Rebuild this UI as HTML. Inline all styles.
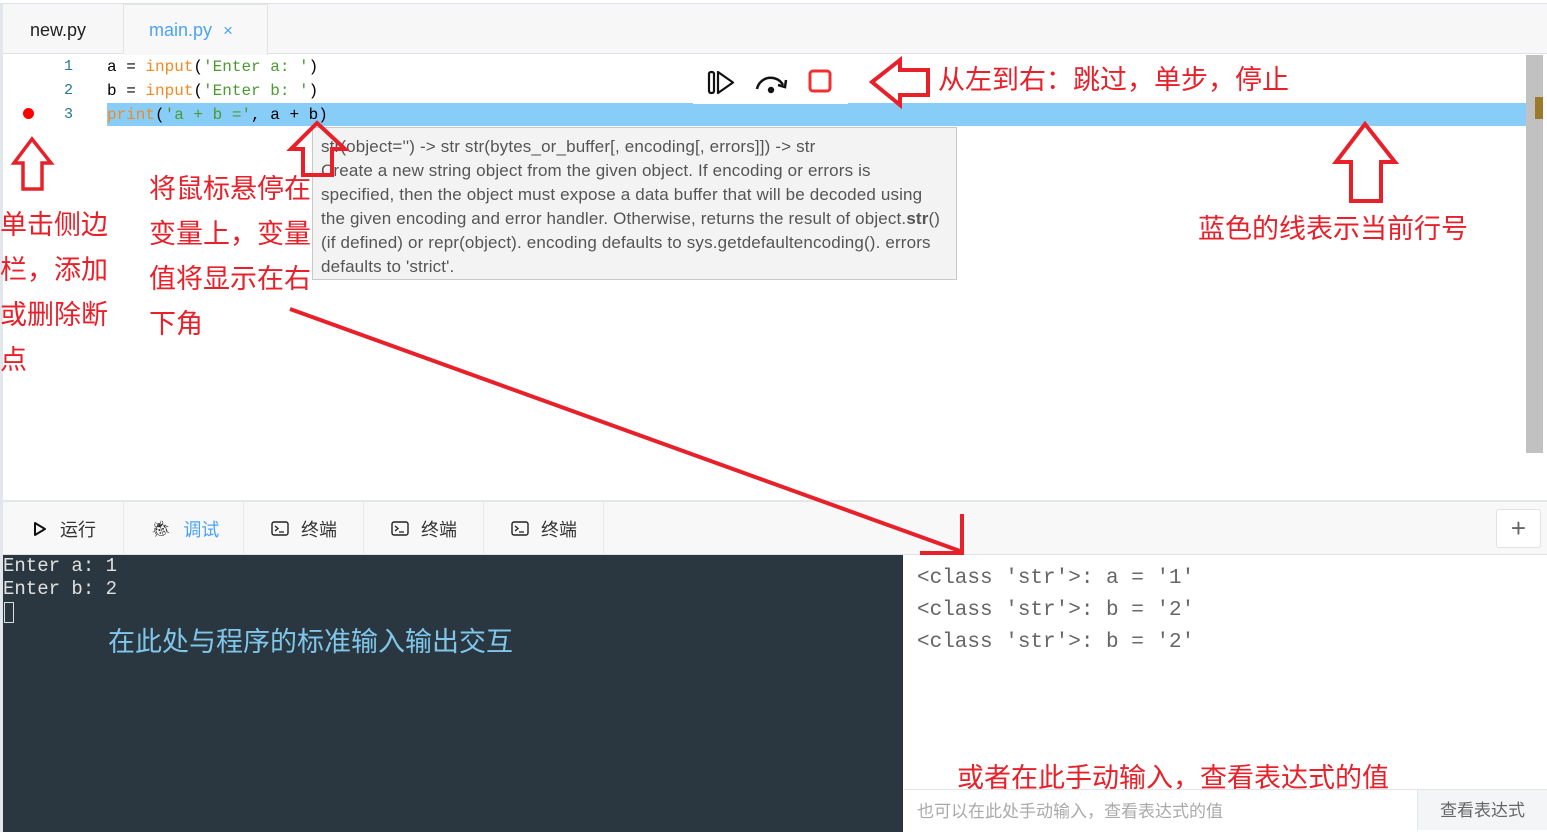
<!DOCTYPE html>
<html><head><meta charset="utf-8"><style>
*{margin:0;padding:0;box-sizing:border-box}
body{width:1547px;height:832px;position:relative;overflow:hidden;background:#fff;font-family:"Liberation Sans","Noto Sans CJK SC",sans-serif}
.abs{position:absolute}
.mono{font-family:"Liberation Mono","DejaVu Sans Mono",monospace}
.red{color:#e8202a;font-family:"Noto Sans CJK SC",sans-serif;font-size:27px;line-height:45px}
</style></head><body>
<div class="abs" style="left:0;top:3px;width:1547px;height:1px;background:#dde1e6"></div>
<div class="abs" style="left:0;top:3px;width:3px;height:829px;background:#e3e6ea"></div>
<div class="abs" style="left:3px;top:4px;width:1544px;height:50px;background:#f7f7f7;border-bottom:1px solid #dde1e6"></div>
<div class="abs" style="left:4px;top:4px;width:120px;height:50px;border-right:1px solid #e2e4e8;font-size:18px;color:#222;line-height:52px;padding-left:26px">new.py</div>
<div class="abs" style="left:124px;top:4px;width:144px;height:51px;background:#f8f8f8;border-right:1px solid #e2e4e8;border-top:1px solid #e2e4e8;font-size:18px;color:#4aa3f5;line-height:50px;padding-left:25px">main.py <span style="font-size:17px;margin-left:6px">×</span></div>
<div class="abs" style="left:107px;top:103px;width:1420px;height:23px;background:#87cdf8"></div>
<div class="abs" style="left:1526px;top:55px;width:17px;height:398px;background:#c1c1c1"></div>
<div class="abs" style="left:1535px;top:97px;width:8px;height:22px;background:#9a7a2a"></div>
<div class="abs" style="left:23px;top:108px;width:11px;height:11px;border-radius:50%;background:#f00"></div>
<div class="abs mono" style="left:64px;top:55px;font-size:15px;line-height:24px;color:#237893">1<br>2<br>3</div>
<div class="abs mono" style="left:107px;top:55px;font-size:16px;line-height:24px;color:#000;white-space:pre">a = <span style="color:#f08a24">input</span>(<span style="color:#4b9a30">'Enter a: '</span>)
b = <span style="color:#f08a24">input</span>(<span style="color:#4b9a30">'Enter b: '</span>)
<span style="color:#f08a24">print</span>(<span style="color:#4b9a30">'a + b ='</span>, a + b)</div>
<div class="abs" style="left:693px;top:60px;width:155px;height:44px;background:#fff"></div>
<svg class="abs" style="left:693px;top:60px" width="155" height="44">
<rect x="16" y="12" width="5" height="21" rx="2" fill="none" stroke="#111" stroke-width="2.2"/>
<path d="M25 12 L40 22.5 L25 33 Z" fill="none" stroke="#111" stroke-width="2.2" stroke-linejoin="round"/>
<path d="M64 29 A14 14 0 0 1 90 25" fill="none" stroke="#111" stroke-width="2.5"/>
<path d="M85 25 L92 27 L93 20" fill="none" stroke="#111" stroke-width="2.5"/>
<circle cx="78" cy="30" r="3.2" fill="#111"/>
<rect x="117" y="11" width="20" height="20" rx="3" fill="none" stroke="#f03030" stroke-width="3"/>
</svg>
<div class="abs" style="left:312px;top:127px;width:645px;height:153px;background:#f3f3f3;border:1px solid #c8c8c8;padding:7px 0 0 8px;font-size:17px;line-height:24px;color:#555;white-space:nowrap;letter-spacing:0.15px">
str(object='') -&gt; str str(bytes_or_buffer[, encoding[, errors]]) -&gt; str<br>Create a new string object from the given object. If encoding or errors is<br>specified, then the object must expose a data buffer that will be decoded using<br>the given encoding and error handler. Otherwise, returns the result of object.<b>str</b>()<br>(if defined) or repr(object). encoding defaults to sys.getdefaultencoding(). errors<br>defaults to 'strict'.</div>
<div class="abs red" style="left:938px;top:55px">从左到右：跳过，单步，停止</div>
<div class="abs red" style="left:1198px;top:204px">蓝色的线表示当前行号</div>
<div class="abs red" style="left:0;top:200px;width:112px">单击侧边栏，添加或删除断点</div>
<div class="abs red" style="left:149px;top:164px;width:162px;height:180px;overflow:hidden">将鼠标悬停在变量上，变量值将显示在右下角</div>
<div class="abs" style="left:3px;top:500px;width:1544px;height:2px;background:#e3e6ea"></div>
<div class="abs" style="left:3px;top:502px;width:1544px;height:53px;background:#f8f8f8;border-bottom:1px solid #dde1e6"></div>
<div class="abs" style="left:3px;top:502px;font-size:18px;color:#333;display:flex">
<div style="width:121px;height:53px;border-right:1px solid #e8e8e8;display:flex;align-items:center;padding-left:30px"><svg width="14" height="16"><path d="M2 2 L12 8 L2 14 Z" fill="none" stroke="#111" stroke-width="2" stroke-linejoin="round"/></svg><span style="margin-left:13px">运行</span></div>
<div style="width:120px;height:53px;border-right:1px solid #e8e8e8;display:flex;align-items:center;padding-left:27px"><span style="font-size:16px">🐞︎</span><span style="margin-left:12px;color:#4aa3f5">调试</span></div>
<div style="width:120px;height:53px;border-right:1px solid #e8e8e8;display:flex;align-items:center;padding-left:27px"><svg width="18" height="16"><rect x="1" y="1" width="16" height="13" rx="2" fill="none" stroke="#222" stroke-width="1.4"/><path d="M4 5 L7 7.5 L4 10 M8 11 H13" fill="none" stroke="#222" stroke-width="1.3"/></svg><span style="margin-left:12px">终端</span></div>
<div style="width:120px;height:53px;border-right:1px solid #e8e8e8;display:flex;align-items:center;padding-left:27px"><svg width="18" height="16"><rect x="1" y="1" width="16" height="13" rx="2" fill="none" stroke="#222" stroke-width="1.4"/><path d="M4 5 L7 7.5 L4 10 M8 11 H13" fill="none" stroke="#222" stroke-width="1.3"/></svg><span style="margin-left:12px">终端</span></div>
<div style="width:120px;height:53px;border-right:1px solid #e8e8e8;display:flex;align-items:center;padding-left:27px"><svg width="18" height="16"><rect x="1" y="1" width="16" height="13" rx="2" fill="none" stroke="#222" stroke-width="1.4"/><path d="M4 5 L7 7.5 L4 10 M8 11 H13" fill="none" stroke="#222" stroke-width="1.3"/></svg><span style="margin-left:12px">终端</span></div>
</div>
<div class="abs" style="left:1496px;top:509px;width:45px;height:39px;border:1px solid #e2e2e2;border-radius:3px;background:#fff;text-align:center;font-size:26px;line-height:36px;color:#666;font-weight:300">+</div>
<div class="abs" style="left:3px;top:555px;width:900px;height:277px;background:#2b3740"></div>
<div class="abs" style="left:3px;top:555px;font-family:'Liberation Mono',monospace;font-size:19px;line-height:23px;color:#e0e0e0;white-space:pre">Enter a: 1
Enter b: 2</div>
<div class="abs" style="left:4px;top:602px;width:10px;height:21px;border:1px solid #ddd"></div>
<div class="abs" style="left:108px;top:620px;font-family:'Noto Sans CJK SC',sans-serif;font-size:27px;line-height:40px;color:#7fc7ea">在此处与程序的标准输入输出交互</div>
<div class="abs" style="left:917px;top:563px;font-family:'Liberation Mono',monospace;font-size:21px;line-height:32px;color:#666;white-space:pre">&lt;class 'str'&gt;: a = '1'
&lt;class 'str'&gt;: b = '2'
&lt;class 'str'&gt;: b = '2'</div>
<div class="abs red" style="left:957px;top:753px">或者在此手动输入，查看表达式的值</div>
<div class="abs" style="left:904px;top:789px;width:643px;height:43px;border-top:1px solid #e2e4e8;background:#fff"></div>
<div class="abs" style="left:917px;top:797px;font-size:17px;color:#aaa;font-family:'Noto Sans CJK SC',sans-serif">也可以在此处手动输入，查看表达式的值</div>
<div class="abs" style="left:1417px;top:790px;width:130px;height:40px;background:#f4f5f7;border-left:1px solid #e2e4e8;text-align:center;line-height:38px;font-size:17px;color:#666;font-family:'Noto Sans CJK SC',sans-serif">查看表达式</div>
<svg class="abs" style="left:0;top:0" width="1547" height="832">
<g fill="none" stroke="#e8202a" stroke-width="4" stroke-linejoin="miter">
<path d="M32 139 L14 163 L23 163 L23 189 L42 189 L42 163 L51 163 Z" stroke-width="3.5"/>
<path d="M317 123 L291 149 L303 149 L303 175 L332 175 L332 149 L345 149 Z"/>
<path d="M1365 124 L1336 162 L1351 162 L1351 201 L1381 201 L1381 162 L1395 162 Z"/>
<path d="M872 82 L900 60 L900 70 L928 70 L928 95 L900 95 L900 105 Z"/>
<path d="M290 309 L960 551"/>
<path d="M962 514 L962 553 L920 553"/>
</g>
</svg>
</body></html>
